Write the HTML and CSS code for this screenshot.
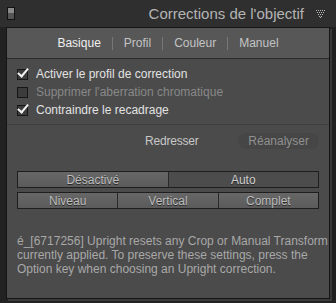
FILE: index.html
```html
<!DOCTYPE html>
<html lang="fr">
<head>
    <meta charset="UTF-8">
    <meta name="viewport" content="width=device-width, initial-scale=1.0">
    <title>Corrections de l'objectif</title>
    <link rel="stylesheet" href="styles.css">
</head>
<body>
    <header class="panel-header">
        <span class="toggle-box"></span>
        <h1>Corrections de l'objectif</h1>
        <svg class="collapse-icon" width="9" height="8" viewBox="0 0 9 8">
            <g fill="#b8b8b8">
                <rect x="0" y="0" width="1" height="1"/><rect x="2" y="0" width="1" height="1"/><rect x="4" y="0" width="1" height="1"/><rect x="6" y="0" width="1" height="1"/><rect x="8" y="0" width="1" height="1"/>
                <rect x="1" y="2" width="1" height="1"/><rect x="3" y="2" width="1" height="1"/><rect x="5" y="2" width="1" height="1"/><rect x="7" y="2" width="1" height="1"/>
                <rect x="2" y="4" width="1" height="1"/><rect x="4" y="4" width="1" height="1"/><rect x="6" y="4" width="1" height="1"/>
                <rect x="3" y="6" width="1" height="1"/><rect x="5" y="6" width="1" height="1"/>
                <rect x="4" y="7" width="1" height="1"/>
            </g>
        </svg>
    </header>

    <div class="panel">
        <nav class="tabs">
            <span class="tab active">Basique</span>
            <span class="sep"></span>
            <span class="tab">Profil</span>
            <span class="sep"></span>
            <span class="tab">Couleur</span>
            <span class="sep"></span>
            <span class="tab">Manuel</span>
        </nav>

        <div class="options">
            <label class="check"><span class="box checked"></span>Activer le profil de correction</label>
            <label class="check disabled"><span class="box"></span>Supprimer l'aberration chromatique</label>
            <label class="check"><span class="box checked"></span>Contraindre le recadrage</label>
        </div>

        <div class="upright">
            <div class="upright-head">
                <span class="upright-label">Redresser</span>
                <span class="reanalyze">Réanalyser</span>
            </div>

            <div class="seg-row">
                <span class="seg">Désactivé</span>
                <span class="seg selected">Auto</span>
            </div>
            <div class="seg-row">
                <span class="seg">Niveau</span>
                <span class="seg">Vertical</span>
                <span class="seg">Complet</span>
            </div>

            <p class="note">é_[6717256] Upright resets any Crop or Manual Transform currently applied. To preserve these settings, press the Option key when choosing an Upright correction.</p>
        </div>
    </div>
</body>
</html>
```

FILE: styles.css
```css
/* Panneau Lightroom */
body {
    margin: 0;
    background: #222;
    font-family: "Liberation Sans", Arial, sans-serif;
    width: 336px;
    height: 303px;
    overflow: hidden;
}

.panel-header {
    height: 27px;
    display: flex;
    align-items: center;
    padding: 0 11px 0 7px;
    background: #2f2f2f;
}

.toggle-box {
    width: 6px;
    height: 11px;
    border: 1px solid #111;
    background: linear-gradient(#8a8a8a 0 45%, #555 45% 100%);
}

.panel-header h1 {
    flex: 1;
    margin: 0 12px 0 0;
    text-align: right;
    font-weight: normal;
    font-size: 15px;
    color: #b4b4b4;
}

.collapse-icon {
    display: block;
}

.panel {
    margin: 0 6px;
    height: 272px;
    box-sizing: border-box;
    border: 1px solid #151515;
    background: #4b4b4b;
    box-shadow: 2px 2px 0 #3a3a3a;
}

.tabs {
    height: 30px;
    display: flex;
    justify-content: center;
    align-items: center;
    gap: 11px;
    background: #575757;
    border-bottom: 1px solid #2c2c2c;
    font-size: 12px;
    color: #c4c4c4;
}

.tab.active {
    color: #f0f0f0;
}

.sep {
    width: 1px;
    height: 13px;
    background: #777;
}

.options {
    padding: 6px 10px 5px;
    border-bottom: 1px solid #3f3f3f;
}

.check {
    display: flex;
    align-items: center;
    height: 18px;
    font-size: 12px;
    color: #e2e2e2;
}

.check.disabled {
    color: #888;
}

.box {
    position: relative;
    width: 9px;
    height: 9px;
    margin-right: 8px;
    border: 1px solid #161616;
    background: #3c3c3c;
}

.box.checked::after {
    content: '';
    position: absolute;
    left: 2px;
    top: -4px;
    width: 4px;
    height: 9px;
    border: solid #f2f2f2;
    border-width: 0 2px 2px 0;
    transform: rotate(40deg);
}

.upright {
    padding: 8px 10px 0;
}

.upright-head {
    display: flex;
    align-items: center;
    height: 16px;
    font-size: 12px;
}

.upright-label {
    margin-left: 128px;
    color: #c8c8c8;
    letter-spacing: -0.2px;
}

.reanalyze {
    margin-left: auto;
    padding: 1px 10px;
    border-radius: 8px;
    background: #464646;
    color: #909090;
}

.seg-row {
    display: flex;
    margin-top: 4px;
    border: 1px solid #1e1e1e;
    height: 15px;
}

.upright-head + .seg-row {
    margin-top: 22px;
}

.seg {
    flex: 1;
    display: flex;
    justify-content: center;
    align-items: center;
    background: linear-gradient(#676767, #5b5b5b);
    color: #bdbdbd;
    font-size: 12px;
    text-shadow: 0 1px 0 #2a2a2a;
    border-left: 1px solid #2a2a2a;
}

.seg:first-child {
    border-left: none;
}

.seg.selected {
    background: #4c4c4c;
    color: #cfcfcf;
}

.note {
    margin: 25px -9px 0 0;
    font-size: 12px;
    line-height: 14px;
    color: #a8a8a8;
}
```
